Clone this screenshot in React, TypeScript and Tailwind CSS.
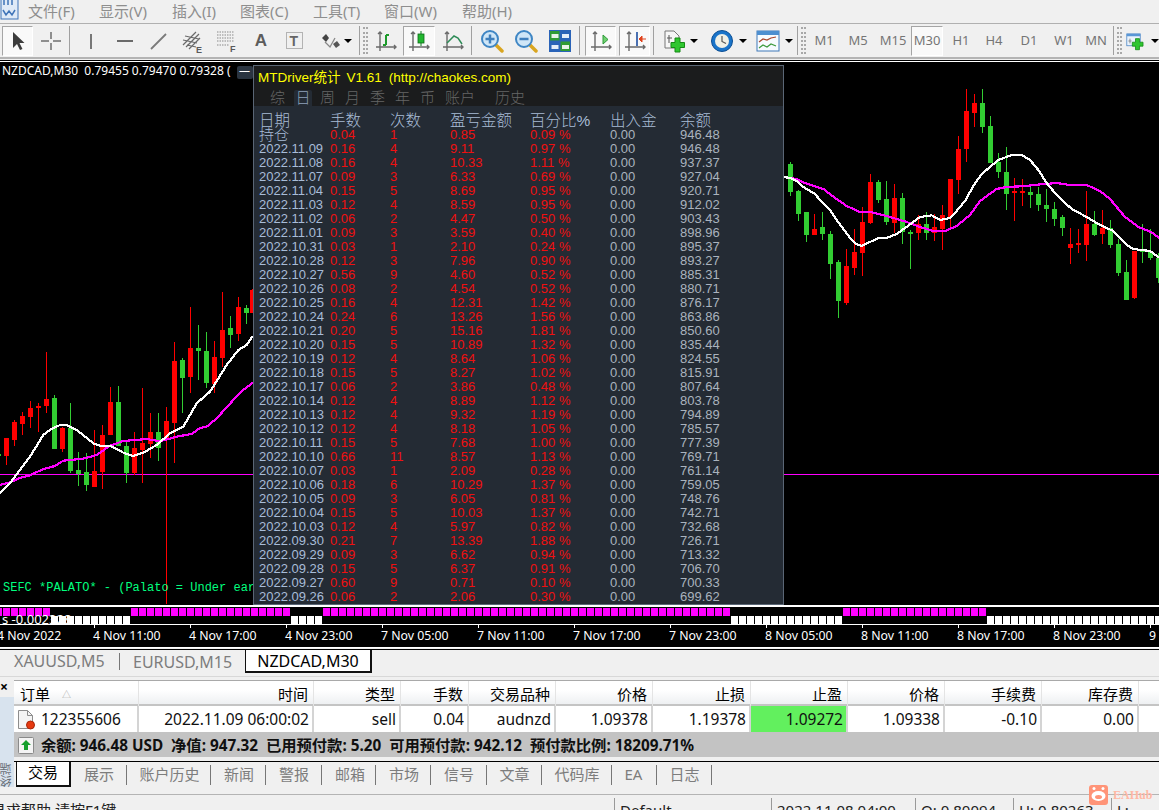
import type { ReactNode } from "react";

const statRows = `持仓 0.04 1 0.85 0.09 946.48
2022.11.09 0.16 4 9.11 0.97 946.48
2022.11.08 0.16 4 10.33 1.11 937.37
2022.11.07 0.09 3 6.33 0.69 927.04
2022.11.04 0.15 5 8.69 0.95 920.71
2022.11.03 0.12 4 8.59 0.95 912.02
2022.11.02 0.06 2 4.47 0.50 903.43
2022.11.01 0.09 3 3.59 0.40 898.96
2022.10.31 0.03 1 2.10 0.24 895.37
2022.10.28 0.12 3 7.96 0.90 893.27
2022.10.27 0.56 9 4.60 0.52 885.31
2022.10.26 0.08 2 4.54 0.52 880.71
2022.10.25 0.16 4 12.31 1.42 876.17
2022.10.24 0.24 6 13.26 1.56 863.86
2022.10.21 0.20 5 15.16 1.81 850.60
2022.10.20 0.15 5 10.89 1.32 835.44
2022.10.19 0.12 4 8.64 1.06 824.55
2022.10.18 0.15 5 8.27 1.02 815.91
2022.10.17 0.06 2 3.86 0.48 807.64
2022.10.14 0.12 4 8.89 1.12 803.78
2022.10.13 0.12 4 9.32 1.19 794.89
2022.10.12 0.12 4 8.18 1.05 785.57
2022.10.11 0.15 5 7.68 1.00 777.39
2022.10.10 0.66 11 8.57 1.13 769.71
2022.10.07 0.03 1 2.09 0.28 761.14
2022.10.06 0.18 6 10.29 1.37 759.05
2022.10.05 0.09 3 6.05 0.81 748.76
2022.10.04 0.15 5 10.03 1.37 742.71
2022.10.03 0.12 4 5.97 0.82 732.68
2022.09.30 0.21 7 13.39 1.88 726.71
2022.09.29 0.09 3 6.62 0.94 713.32
2022.09.28 0.15 5 6.37 0.91 706.70
2022.09.27 0.60 9 0.71 0.10 700.33
2022.09.26 0.06 2 2.06 0.30 699.62`
  .split("\n")
  .map((r) => r.split(" "));

// candles: center x, high, low, body top, body bottom, up?
type Candle = [number, number, number, number, number, number];
const leftCandles: Candle[] = [
  [-5, 525, 528, 522, 528, 1],
  [19, 475, 555, 475, 530, 0],
  [43, 420, 497, 427, 480, 0],
  [67, 397, 467, 408, 432, 0],
  [91, 363, 443, 384, 411, 0],
  [115, 370, 458, 378, 384, 0],
  [139, 216, 399, 357, 378, 0],
  [163, 346, 507, 354, 507, 1],
  [187, 440, 515, 444, 507, 0],
  [211, 370, 579, 444, 573, 1],
  [235, 516, 618, 570, 582, 1],
  [259, 519, 633, 576, 615, 1],
  [283, 450, 621, 573, 621, 0],
  [307, 435, 627, 465, 576, 0],
  [331, 321, 465, 366, 465, 0],
  [355, 318, 498, 366, 498, 1],
  [379, 487, 609, 498, 579, 1],
  [403, 456, 585, 504, 579, 0],
  [427, 324, 609, 489, 510, 0],
  [451, 399, 534, 456, 492, 0],
  [475, 399, 543, 456, 504, 1],
  [499, 381, 972, 423, 480, 0],
  [523, 186, 549, 243, 429, 0],
  [547, 234, 399, 240, 294, 1],
  [571, 81, 339, 204, 291, 0],
  [595, 135, 300, 204, 213, 1],
  [619, 156, 324, 213, 309, 1],
  [643, 183, 339, 231, 312, 0],
  [667, 36, 261, 150, 234, 0],
  [691, 108, 204, 144, 165, 1],
  [715, 51, 183, 81, 162, 0],
  [739, 75, 132, 84, 99, 1],
  [757, 27, 99, 30, 99, 0],
];
const rightCandles: Candle[] = [
  [31, 246, 348, 252, 336, 1],
  [55, 330, 423, 333, 402, 1],
  [79, 396, 486, 396, 465, 1],
  [103, 402, 465, 447, 465, 0],
  [127, 396, 480, 441, 462, 1],
  [151, 453, 597, 462, 552, 1],
  [175, 540, 714, 546, 663, 1],
  [199, 507, 675, 558, 669, 0],
  [223, 447, 585, 516, 564, 0],
  [247, 381, 588, 426, 519, 0],
  [271, 282, 432, 306, 429, 0],
  [295, 300, 369, 306, 360, 1],
  [319, 303, 435, 357, 426, 1],
  [343, 312, 459, 354, 429, 0],
  [367, 339, 492, 354, 456, 1],
  [391, 450, 567, 456, 462, 1],
  [415, 405, 480, 432, 459, 0],
  [439, 396, 480, 432, 459, 1],
  [463, 402, 483, 441, 459, 0],
  [487, 375, 510, 405, 447, 0],
  [511, 297, 441, 297, 411, 0],
  [535, 168, 342, 207, 300, 0],
  [559, 27, 246, 93, 207, 0],
  [583, 42, 141, 69, 99, 0],
  [607, 27, 159, 69, 141, 1],
  [631, 108, 249, 138, 249, 1],
  [655, 219, 294, 246, 276, 1],
  [679, 201, 390, 276, 342, 1],
  [703, 294, 423, 333, 339, 0],
  [727, 297, 378, 333, 336, 0],
  [751, 321, 384, 336, 345, 1],
  [775, 321, 393, 342, 375, 1],
  [799, 327, 426, 375, 387, 1],
  [823, 366, 438, 387, 417, 1],
  [847, 405, 468, 411, 444, 1],
  [871, 444, 552, 492, 504, 0],
  [895, 447, 519, 489, 495, 0],
  [919, 333, 543, 432, 495, 0],
  [943, 393, 468, 432, 465, 1],
  [967, 390, 492, 444, 462, 0],
  [991, 420, 504, 444, 495, 1],
  [1015, 477, 588, 492, 579, 1],
  [1039, 540, 660, 576, 660, 1],
  [1063, 513, 657, 513, 654, 0],
  [1087, 432, 549, 510, 516, 1],
  [1111, 447, 540, 513, 534, 1],
  [1135, 520, 609, 534, 594, 1],
];

const whiteLeft = [[0,639],[30,610],[60,570],[90,530],[130,465],[150,450],[180,435],[200,435],[230,450],[280,490],[300,497],[330,497],[370,518],[400,528],[430,518],[470,495],[510,460],[550,440],[590,370],[630,335],[680,255],[715,210],[740,195],[758,168]];
const magentaLeft = [[0,615],[30,607],[60,594],[90,586],[130,567],[165,558],[190,542],[250,536],[290,525],[330,497],[370,483],[440,477],[480,484],[530,470],[575,462],[600,444],[620,440],[650,415],[700,360],[730,330],[758,308]];
const whiteRight = [[12,291],[30,294],[50,303],[70,321],[90,333],[105,342],[120,360],[150,390],[170,420],[190,447],[210,474],[225,490],[245,498],[270,486],[295,474],[320,474],[350,462],[375,444],[400,426],[420,411],[455,406],[480,420],[510,414],[530,393],[555,363],[580,318],[605,282],[630,261],[655,240],[695,225],[725,225],[750,240],[775,270],[800,309],[830,345],[875,387],[920,411],[960,435],[1000,453],[1040,495],[1060,507],[1110,513],[1137,532]];
const magentaRight = [[12,291],[50,297],[75,309],[130,327],[170,357],[200,378],[240,396],[270,396],[320,408],[380,426],[420,441],[460,453],[495,453],[530,438],[570,405],[600,363],[650,327],[680,321],[740,318],[760,315],[830,309],[870,315],[920,315],[960,333],[990,357],[1035,411],[1075,441],[1115,457],[1137,474]];

const pts = (list: number[][], ox: number, oy: number) =>
  list.map(([x, y]) => `${ox + x / 3},${oy + y / 3}`).join(" ");

function Candles({ data, ox, oy }: { data: Candle[]; ox: number; oy: number }) {
  return (
    <>
      {data.map(([cx, hi, lo, top, bot, up]) => {
        const x = Math.floor(ox + cx / 3);
        const color = up ? "#32cd32" : "#ff0000";
        return (
          <g key={cx} fill={color}>
            <rect x={x} y={Math.round(oy + hi / 3)} width={1} height={Math.round((lo - hi) / 3)} />
            <rect x={x - 2} y={Math.round(oy + top / 3)} width={5} height={Math.max(2, Math.round((bot - top) / 3))} />
          </g>
        );
      })}
    </>
  );
}

function ChartDrawing() {
  return (
    <svg className="absolute inset-0" width={1159} height={543} viewBox="0 62 1159 543" shapeRendering="crispEdges">
      <rect x={0} y={474} width={1159} height={1} fill="#ff00ff" />
      <Candles data={leftCandles} ox={0} oy={280} />
      <Candles data={rightCandles} ox={780} oy={80} />
      <polyline points={pts(magentaLeft, 0, 280)} fill="none" stroke="#ff00ff" strokeWidth={2.2} />
      <polyline points={pts(whiteLeft, 0, 280)} fill="none" stroke="#ffffff" strokeWidth={2.2} />
      <polyline points={pts(magentaRight, 780, 80)} fill="none" stroke="#ff00ff" strokeWidth={2.2} />
      <polyline points={pts(whiteRight, 780, 80)} fill="none" stroke="#ffffff" strokeWidth={2.2} />
    </svg>
  );
}

function squares(from: number, to: number, y: number, h: number, fill: string) {
  const out = [];
  for (let x = from; x < to; x += 8) {
    out.push(<rect key={`${fill}${x}`} x={x} y={y} width={7} height={h} fill={fill} />);
  }
  return out;
}

function SubIndicator() {
  return (
    <svg className="block" width={1159} height={16} viewBox="0 608 1159 16" shapeRendering="crispEdges">
      {squares(-5, 50, 608, 8, "#ff00ff")}
      {squares(131, 290, 608, 8, "#ff00ff")}
      {squares(323, 730, 608, 8, "#ff00ff")}
      {squares(843, 987, 608, 8, "#ff00ff")}
      {squares(51, 130, 616, 8, "#ffffff")}
      {squares(291, 322, 616, 8, "#ffffff")}
      {squares(731, 842, 616, 8, "#ffffff")}
      {squares(987, 1159, 616, 8, "#ffffff")}
    </svg>
  );
}

const axisLabels = ["4 Nov 2022", "4 Nov 11:00", "4 Nov 17:00", "4 Nov 23:00", "7 Nov 05:00", "7 Nov 11:00", "7 Nov 17:00", "7 Nov 23:00", "8 Nov 05:00", "8 Nov 11:00", "8 Nov 17:00", "8 Nov 23:00", "9 Nov 05:00"];

/* toolbar icons, 24px box */
function Ico({ children }: { children: ReactNode }) {
  return (
    <svg width={24} height={24} viewBox="0 0 24 24" fill="none">
      {children}
    </svg>
  );
}

const ArrowIcon = () => (
  <Ico>
    <path d="M7 3v16l4-4 3 6 2.500-1-3-6h5z" fill="#3c3c3c" />
  </Ico>
);
const CrossIcon = () => (
  <Ico>
    <path d="M12 3v7M12 14v7M2 12h8M14 12h8" stroke="#6e6e6e" strokeWidth={1.5} />
  </Ico>
);
const VLineIcon = () => (
  <Ico>
    <path d="M12 5v15" stroke="#777" strokeWidth={2} />
  </Ico>
);
const HLineIcon = () => (
  <Ico>
    <path d="M4 12h16" stroke="#6a6a6a" strokeWidth={2} />
  </Ico>
);
const DiagIcon = () => (
  <Ico>
    <path d="M4 20 19 5" stroke="#7a7a7a" strokeWidth={1.8} />
  </Ico>
);
const FibEIcon = () => (
  <Ico>
    <path d="M2 16 15 3M5 18 18 5M8 20 19 9M2 11l14 3M4 7l14 3M6 16l9 2" stroke="#6a6a6a" strokeWidth={1.2} />
    <text x={15} y={24} fontSize={9} fontWeight={700} fill="#5a5a5a" fontFamily="Liberation Sans">E</text>
  </Ico>
);
const FibFIcon = () => (
  <Ico>
    <path d="M2 3h17M2 6h17M2 9h17M2 12h17M2 16h12" stroke="#8a8a8a" strokeWidth={1.2} strokeDasharray="1.500 1" />
    <text x={15} y={23} fontSize={9} fontWeight={700} fill="#5a5a5a" fontFamily="Liberation Sans">F</text>
  </Ico>
);
const TextBoxIcon = () => (
  <Ico>
    <rect x={3.500} y={3.500} width={16} height={16} stroke="#777" strokeDasharray="1 1" />
    <text x={6.500} y={17} fontSize={14} fontWeight={700} fill="#666" fontFamily="Liberation Sans">T</text>
  </Ico>
);
const ShapesIcon = () => (
  <Ico>
    <path d="M3 9l4-4 3 4-3 4z" fill="#444" />
    <path d="M14 15l4-3 3 4-4 3z" fill="#555" />
    <path d="M6 13l5 5 5-9" stroke="#888" strokeWidth={1.3} />
  </Ico>
);

function Axes({ children }: { children?: ReactNode }) {
  return (
    <Ico>
      <path d="M6 3v19M2 18h20M4 5l2-2 2 2M20 16l2 2-2 2" stroke="#6a6a6a" strokeWidth={1.4} />
      {children}
    </Ico>
  );
}
const BarIcon = () => (
  <Axes>
    <path d="M12 16V6M12 6h3M9 16h3" stroke="#1d9a2c" strokeWidth={2} />
  </Axes>
);
const CandleIcon = () => (
  <Axes>
    <path d="M14 2v15" stroke="#0c7c1c" strokeWidth={1} />
    <rect x={11} y={5} width={6} height={9} fill="#22b72f" stroke="#0c6c18" strokeWidth={0.8} />
  </Axes>
);
const LineIcon = () => (
  <Axes>
    <path d="M6 14 13 7l4 2 4 6" stroke="#2e8b57" strokeWidth={1.5} />
  </Axes>
);
const AutoIcon = () => (
  <Axes>
    <path d="M14 6v9l5-4.500z" fill="#6fd06f" stroke="#2f9a3a" />
  </Axes>
);
const ShiftIcon = () => (
  <Axes>
    <path d="M14 3v14" stroke="#1f4fa0" strokeWidth={1.6} />
    <path d="M23 10h-4M19 7l-3 3 3 3z" stroke="#e0431d" fill="#e0431d" />
  </Axes>
);
function Magnify({ minus }: { minus?: boolean }) {
  return (
    <Ico>
      <path d="M15 15l7 7" stroke="#d9a520" strokeWidth={3.500} strokeLinecap="round" />
      <circle cx={10} cy={10} r={8} fill="#cfe6f7" stroke="#3f86c4" strokeWidth={2} />
      <path d={minus ? "M5.500 10h9" : "M5.500 10h9M10 5.500v9"} stroke="#3f7fbc" strokeWidth={2.500} />
    </Ico>
  );
}
const GridIcon = () => (
  <Ico>
    <rect x={1} y={1} width={22} height={22} fill="#2a63b8" />
    <rect x={2} y={2} width={9.500} height={9.500} fill="#2f9b33" />
    <rect x={12.500} y={12.500} width={9.500} height={9.500} fill="#2f9b33" />
    <rect x={3.500} y={5} width={7} height={4} fill="#e8f3e8" />
    <rect x={14} y={5} width={7} height={4} fill="#e4edf9" />
    <rect x={3.500} y={16} width={7} height={4} fill="#e4edf9" />
    <rect x={14} y={16} width={7} height={4} fill="#e8f3e8" />
  </Ico>
);
const DocPlusIcon = () => (
  <Ico>
    <path d="M3 2h9l5 5v12H3z" fill="#f6f6f6" stroke="#777" />
    <path d="M7 6v8M5 9h5" stroke="#555" />
    <path d="M12 8h5v4.500h4.500v5H17V22h-5v-4.500H8v-5h4z" transform="translate(1 1)" fill="#2fc62f" stroke="#158a15" />
  </Ico>
);
const ClockIcon = () => (
  <Ico>
    <circle cx={12} cy={12} r={10.500} fill="#1a74c9" stroke="#0c4f94" />
    <circle cx={12} cy={12} r={7} fill="#f0f0e6" />
    <path d="M12 7v5.500l4 2" stroke="#555" strokeWidth={1.2} />
  </Ico>
);
const TemplateIcon = () => (
  <Ico>
    <rect x={1} y={2} width={22} height={20} fill="#f7fbff" stroke="#3f78b8" />
    <rect x={1} y={2} width={22} height={4} fill="#4d8fd0" />
    <path d="M3 13l4-3 4 1 4-2 5-1" stroke="#a8442a" strokeWidth={1.2} />
    <path d="M3 19l4-3 4 2 4-3 5 2" stroke="#3c9a3c" strokeWidth={1.2} />
  </Ico>
);
const WindowPlusIcon = () => (
  <Ico>
    <rect x={1} y={3} width={17} height={15} fill="#eaf3fc" stroke="#4d86c6" />
    <rect x={1} y={3} width={17} height={3} fill="#5a97d6" />
    <path d="M5 9v6M3 12h4" stroke="#777" />
    <path d="M12 9h5v4.500h4.500v5H17V23h-5v-4.500H8v-5h4z" fill="#2fc62f" stroke="#158a15" />
  </Ico>
);

const Caret = () => <span className="w-0 h-0 border-x-[4px] border-x-transparent border-t-[4px] border-t-black" />;
const Sep = () => <span className="w-[2px] h-[29px] shrink-0 border-l border-[#a0a0a0] border-r-white" />;
const Grip = () => (
  <span className="w-[5px] h-[27px] shrink-0 border-x-2 border-dotted border-[#a8a8a8]" />
);

function Btn({ w, active, children }: { w: string; active?: boolean; children: ReactNode }) {
  return (
    <div
      className={`${w} h-[30px] shrink-0 flex items-center justify-center ${
        active ? "bg-[#f9f9f9] border border-t-[#a5a5a5] border-l-[#a5a5a5] border-r-white border-b-white" : ""
      }`}
    >
      {children}
    </div>
  );
}

function Drop({ w, icon, gap }: { w: string; icon: ReactNode; gap: string }) {
  return (
    <div className={`${w} h-[30px] shrink-0 flex items-center justify-center ${gap}`}>
      {icon}
      <Caret />
    </div>
  );
}

const timeframes: [string, string, boolean?][] = [
  ["M1", "w-[34px]"],
  ["M5", "w-[34px]"],
  ["M15", "w-[36px]"],
  ["M30", "w-[32px]", true],
  ["H1", "w-[36px]"],
  ["H4", "w-[30px]"],
  ["D1", "w-[40px]"],
  ["W1", "w-[30px]"],
  ["MN", "w-[34px]"],
];

function Toolbar() {
  return (
    <div className="h-[33px] flex items-center bg-[#f0f0f0] overflow-hidden">
      <div className="w-[2px] shrink-0" />
      <Btn w="w-[31px]" active><ArrowIcon /></Btn>
      <Btn w="w-[36px]"><CrossIcon /></Btn>
      <Sep />
      <div className="w-[3px] shrink-0" />
      <Btn w="w-[34px]"><VLineIcon /></Btn>
      <Btn w="w-[34px]"><HLineIcon /></Btn>
      <Btn w="w-[34px]"><DiagIcon /></Btn>
      <Btn w="w-[34px]"><FibEIcon /></Btn>
      <Btn w="w-[34px]"><FibFIcon /></Btn>
      <Btn w="w-[34px]">
        <span className="text-[17px] font-bold text-[#5c5c5c] font-['Liberation_Sans',sans-serif]">A</span>
      </Btn>
      <Btn w="w-[34px]"><TextBoxIcon /></Btn>
      <Drop w="w-[47px]" icon={<ShapesIcon />} gap="gap-[1px]" />
      <Sep />
      <div className="w-[2px] shrink-0" />
      <Grip />
      <div className="w-[1px] shrink-0" />
      <Btn w="w-[34px]"><BarIcon /></Btn>
      <Btn w="w-[32px]" active><CandleIcon /></Btn>
      <Btn w="w-[36px]"><LineIcon /></Btn>
      <Sep />
      <div className="w-[2px] shrink-0" />
      <Btn w="w-[34px]"><Magnify /></Btn>
      <Btn w="w-[34px]"><Magnify minus /></Btn>
      <Btn w="w-[34px]"><GridIcon /></Btn>
      <div className="w-[2px] shrink-0" />
      <Sep />
      <div className="w-[4px] shrink-0" />
      <Btn w="w-[31px]" active><AutoIcon /></Btn>
      <div className="w-[3px] shrink-0" />
      <Btn w="w-[31px]" active><ShiftIcon /></Btn>
      <div className="w-[3px] shrink-0" />
      <Sep />
      <Drop w="w-[50px]" icon={<DocPlusIcon />} gap="gap-[4px]" />
      <Drop w="w-[47px]" icon={<ClockIcon />} gap="gap-[5px]" />
      <Drop w="w-[45px]" icon={<TemplateIcon />} gap="gap-[5px]" />
      <Sep />
      <div className="w-[2px] shrink-0" />
      <Grip />
      <div className="w-[1px] shrink-0" />
      {timeframes.map(([t, w, active]) => (
        <Btn key={t} w={w} active={active}>
          <span className="text-[13px] text-[#757575]">{t}</span>
        </Btn>
      ))}
      <Sep />
      <div className="w-[2px] shrink-0" />
      <Grip />
      <div className="w-[4px] shrink-0" />
      <WindowPlusIcon />
      <div className="w-[6px] shrink-0" />
      <Caret />
    </div>
  );
}

const menus = [
  ["文件(F)", "w-[71px]"],
  ["显示(V)", "w-[73px]"],
  ["插入(I)", "w-[68px]"],
  ["图表(C)", "w-[73px]"],
  ["工具(T)", "w-[71px]"],
  ["窗口(W)", "w-[78px]"],
  ["帮助(H)", "w-[80px]"],
];

const panelTabs: [string, string][] = [
  ["综", "w-[35px] pl-[16px]"],
  ["日", "w-[25px] pl-[5px]"],
  ["周", "w-[25px] pl-[6px]"],
  ["月", "w-[25px] pl-[6px]"],
  ["季", "w-[25px] pl-[6px]"],
  ["年", "w-[25px] pl-[6px]"],
  ["币", "w-[25px] pl-[6px]"],
  ["账户", "w-[50px] pl-[6px]"],
  ["历史", "w-[50px] pl-[6px]"],
];

function StatPanel() {
  return (
    <div className="absolute left-[253px] top-[3px] w-[531px] h-[540px] border border-[#5a6675] bg-[#242b34] font-['Liberation_Sans','Noto_Sans_CJK_SC',sans-serif] overflow-hidden">
      <div className="h-[40px] bg-[#1b1c1d]">
        <div className="h-[23px] pt-[1px] pl-[4px] flex items-center text-[13.500px] text-[#ffff00] whitespace-pre">
          <span>MTDriver统计</span>
          <span className="ml-[6px]">V1.61</span>
          <span className="ml-[7px]">(http://chaokes.com)</span>
        </div>
        <div className="h-[17px] pt-[1px] flex items-start text-[15px] leading-[15px] font-light text-[#666666]">
          {panelTabs.map(([t, cls]) => (
            <div key={t} className={`${cls} shrink-0`}>
              <span className={t === "日" ? "inline-block w-[18px] h-[16px] text-center rounded-t-[2px] bg-[#242b34] text-[#8ea2ba]" : ""}>{t}</span>
            </div>
          ))}
        </div>
      </div>
      <div className="pl-[5px] pt-[8px]">
        <div className="h-[14px] flex items-center text-[15.500px] font-light text-[#a8bcd6]">
          <span className="w-[71px]">日期</span>
          <span className="w-[60px]">手数</span>
          <span className="w-[60px]">次数</span>
          <span className="w-[80px]">盈亏金额</span>
          <span className="w-[80px]">百分比%</span>
          <span className="w-[70px]">出入金</span>
          <span>余额</span>
        </div>
        {statRows.map(([date, lots, n, pl, pct, bal]) => (
          <div key={date} className="h-[14px] leading-[14px] flex text-[13px]">
            <span className={`w-[71px] text-[#a8bcd8] ${date === "持仓" ? "text-[15px] font-light" : ""}`}>{date}</span>
            <span className="w-[60px] text-[#f01010]">{lots}</span>
            <span className="w-[60px] text-[#f01010]">{n}</span>
            <span className="w-[80px] text-[#f01010]">{pl}</span>
            <span className="w-[80px] text-[#f01010]">{pct} %</span>
            <span className="w-[70px] text-[#aab3be]">0.00</span>
            <span className="text-[#aab3be]">{bal}</span>
          </div>
        ))}
      </div>
    </div>
  );
}

const tradeCols = "grid grid-cols-[125px_175px_87px_68px_87px_97px_98px_97px_97px_97px_97px_20px]";
const tradeHead = ["时间", "类型", "手数", "交易品种", "价格", "止损", "止盈", "价格", "手续费", "库存费"];
const tradeRow = ["2022.11.09 06:00:02", "sell", "0.04", "audnzd", "1.09378", "1.19378", "1.09272", "1.09338", "-0.10", "0.00"];
const bottomTabs: [string, string][] = [
  ["展示", "w-[55.500px]"],
  ["账户历史", "w-[84.500px]"],
  ["新闻", "w-[55px]"],
  ["警报", "w-[56px]"],
  ["邮箱", "w-[54px]"],
  ["市场", "w-[55px]"],
  ["信号", "w-[55.500px]"],
  ["文章", "w-[55px]"],
  ["代码库", "w-[70px]"],
  ["EA", "w-[45px]"],
  ["日志", "w-[55px]"],
];

function Terminal() {
  return (
    <div className="flex h-[107px]">
      <div className="w-[14px] shrink-0 flex flex-col">
        <div className="h-[17px] text-[14px] leading-[14px] text-black font-bold">×</div>
        <div className="flex-1 bg-[#d8e3ee] flex flex-col justify-end items-center overflow-hidden">
          <span className="text-[12px] leading-[14px] text-[#6a7078] [writing-mode:vertical-rl] rotate-180">终端</span>
        </div>
      </div>
      <div className="flex-1 min-w-0">
        <div className="border-t border-[#a9a9a9]">
          <div className={`${tradeCols} h-[25px] text-[15px] text-black bg-gradient-to-b from-white from-40% to-[#eef0f2] border-b-2 border-[#c4c4c4]`}>
            <div className="flex items-center pt-[2px] pl-[6px] gap-[12px] border-r border-[#e4e4e4]">
              订单 <span className="text-[9px] text-[#a8a8a8]">△</span>
            </div>
            {tradeHead.map((h, i) => (
              <div key={i} className="flex items-center pt-[2px] justify-end pr-[5px] border-r border-[#e4e4e4]">
                {h}
              </div>
            ))}
            <div />
          </div>
          <div className={`${tradeCols} h-[26px] text-[15.500px] text-[#101010] bg-white`}>
            <div className="flex items-center pt-[1px] pl-[3px] gap-[5px] border-r-2 border-[#d4d4d4]">
              <svg width={19} height={21} viewBox="0 0 19 21" fill="none">
                <path d="M1.500 1.500h9l5 5v12a1 1 0 0 1-1 1h-13z" fill="#f4f4f4" stroke="#8d8d8d" />
                <path d="M10.500 1.500v5h5" stroke="#8d8d8d" />
                <circle cx={13.500} cy={16} r={4} fill="#e6390f" stroke="#a82608" />
              </svg>
              <span>122355606</span>
            </div>
            {tradeRow.map((c, i) => (
              <div
                key={i}
                className={`flex items-center pt-[1px] justify-end pr-[3px] border-r-2 border-[#d4d4d4] ${c === "1.09272" ? "bg-[#62f05e]" : ""}`}
              >
                {c}
              </div>
            ))}
            <div />
          </div>
          <div className="h-[25px] pt-[1px] bg-[#c3c3c3] flex items-center pl-[3px] text-[15.300px] font-bold text-[#101010] whitespace-pre">
            <svg className="mr-[5px] shrink-0" width={19} height={19} viewBox="0 0 19 19" fill="none">
              <rect x={1.500} y={1.500} width={15} height={16} rx={1} fill="#f4f4f4" stroke="#8a8a8a" />
              <path d="M9 4l5 5h-3v5H7V9H4z" fill="#16a02c" />
            </svg>
            余额: 946.48 USD  净值: 947.32  已用预付款: 5.20  可用预付款: 942.12  预付款比例: 18209.71%
          </div>
        </div>
        <div className="h-[4px]" />
        <div className="h-[1px] bg-black" />
        <div className="h-[25px] ml-[2px] flex items-center text-[15px] text-[#7d7d7d]">
          <div className="w-[55px] h-[25px] -mt-[1px] leading-[21px] text-center text-black bg-white border-l border-r-2 border-b-2 border-[#111]">交易</div>
          {bottomTabs.map(([t, w]) => (
            <div key={t} className={`${w} pl-[13px] shrink-0 h-[20px] leading-[18px] border-r border-[#777]`}>
              {t}
            </div>
          ))}
        </div>
      </div>
    </div>
  );
}

export default function App() {
  return (
    <div className="relative w-[1159px] h-[810px] overflow-hidden bg-[#f0f0f0] font-['Noto_Sans','Noto_Sans_CJK_SC',sans-serif]">
      {/* menu */}
      <div className="h-[23px] flex items-center text-[15px] text-[#8e8e8e]">
        <svg className="shrink-0 w-[28px]" width={28} height={23} viewBox="0 0 28 23" fill="none">
          <rect x={1} y={-3} width={17} height={22} fill="#dfeaf7" stroke="#3f74b8" />
          <path d="M3 10l3 5 3-4 3 4 3-5" stroke="#3f74b8" strokeWidth={1.5} />
          <path d="M4 0v5M8 0v5M12 0v5" stroke="#3f74b8" strokeWidth={1.5} />
        </svg>
        {menus.map(([m, w]) => (
          <div key={m} className={`${w} shrink-0`}>{m}</div>
        ))}
      </div>
      <div className="h-[1px] bg-[#b0b0b0]" />
      <Toolbar />
      <div className="h-[2px] bg-[#b4b4b4]" />
      <div className="h-[1px] bg-[#f0f0f0]" />
      <div className="h-[1px] bg-black" />
      <div className="h-[1px] bg-white" />

      {/* chart */}
      <div className="relative h-[543px] bg-black overflow-hidden">
        <ChartDrawing />
        <div className="absolute left-[2px] top-[2px] text-[12px] leading-[14px] text-white whitespace-pre">
          NZDCAD,M30  0.79455 0.79470 0.79328 (
        </div>
        <div className="absolute left-[237px] top-[4px] w-[16px] h-[13px] bg-[#2a3440] rounded-[2px] text-white text-[11px] leading-[11px] pl-[2px]">一</div>
        <div className="absolute left-[3px] top-[519px] text-[12px] leading-[14px] text-[#00ff7f] whitespace-pre font-['Liberation_Mono',monospace]">
          SEFC *PALATO* - (Palato = Under earth
        </div>
        <StatPanel />
      </div>
      <div className="h-[2px] bg-white" />
      <div className="h-[1px] bg-black" />

      {/* sub indicator */}
      <div className="relative h-[16px] bg-black overflow-hidden">
        <SubIndicator />
        <div className="absolute left-[2px] top-[4px] text-[13px] leading-[14px] text-white">s -0.002328</div>
      </div>
      <div className="h-[1px] bg-white" />

      {/* time axis */}
      <div className="h-[22px] bg-black flex overflow-hidden text-[12.300px] leading-[15px] text-white">
        <div className="-ml-[2px] flex">
          {axisLabels.map((l) => (
            <div key={l} className="w-[96px] shrink-0">
              <div className="w-[1px] h-[3px] bg-white" />
              <div className="-ml-[1px] whitespace-nowrap">{l}</div>
            </div>
          ))}
        </div>
      </div>
      <div className="h-[1px] bg-white" />
      <div className="h-[1px] bg-[#f0f0f0]" />
      <div className="h-[1px] bg-black" />

      {/* chart tabs */}
      <div className="h-[23px] flex items-center text-[16px] text-[#7d7d7d]">
        <div className="w-[120px] pl-[14px] h-[17px] leading-[17px] border-r border-[#777]">XAUUSD,M5</div>
        <div className="w-[125px] pl-[13px]">EURUSD,M15</div>
        <div className="w-[127px] h-[23px] leading-[22px] text-center text-black bg-white border-l border-r-2 border-b-2 border-[#111]">NZDCAD,M30</div>
      </div>
      <div className="h-[3px]" />
      <div className="h-[1px] bg-[#d8d8d8]" />
      <div className="h-[3px]" />

      <Terminal />

      <div className="h-[7px]" />
      <div className="h-[1px] bg-[#b4b4b4]" />
      <div className="h-[3px]" />

      {/* status bar */}
      <div className="h-[12px] flex text-[15px] leading-[20px] text-[#222] overflow-hidden">
        <div className="w-[614px] shrink-0 -ml-[9px] pt-[2px] whitespace-nowrap">寻求帮助 请按F1键</div>
        <div className="w-[157px] shrink-0 pl-[5px] pt-[2px] ml-[9px] border-l border-[#999]">Default</div>
        <div className="w-[144px] shrink-0 pl-[5px] pt-[2px] border-l border-[#999]">2022.11.08 04:00</div>
        <div className="w-[98px] shrink-0 pl-[5px] pt-[2px] border-l border-[#999]">O: 0.80094</div>
        <div className="w-[98px] shrink-0 pl-[5px] pt-[2px] border-l border-[#999]">H: 0.80263</div>
        <div className="pl-[5px] pt-[2px] border-l border-[#999]">L: 0.80</div>
      </div>

      {/* watermark */}
      <div className="absolute left-[1089px] top-[785px] flex items-center gap-[5px]">
        <svg width={19} height={20} viewBox="0 0 19 20">
          <rect width={19} height={20} rx={3} fill="#ff9478" />
          <ellipse cx={9.500} cy={11} rx={7} ry={5} fill="#fff" />
          <circle cx={5} cy={3.500} r={1.500} fill="#fff" />
          <circle cx={14} cy={3.500} r={1.500} fill="#fff" />
          <ellipse cx={9.500} cy={12} rx={3.500} ry={2} fill="#ff9478" />
        </svg>
        <span className="text-[12px] font-bold text-[#ffb8a4] font-['Liberation_Serif',serif]">EAHub</span>
      </div>
    </div>
  );
}
